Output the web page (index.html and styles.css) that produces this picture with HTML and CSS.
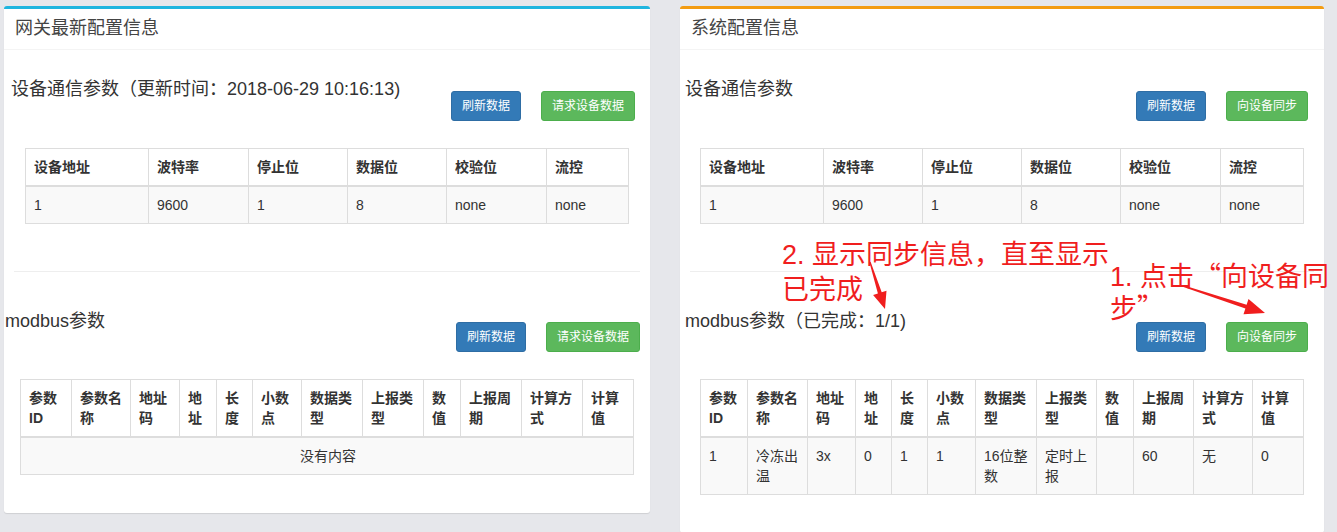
FILE: index.html
```html
<!DOCTYPE html>
<html lang="zh-CN">
<head>
<meta charset="utf-8">
<title>配置信息</title>
<link rel="stylesheet" href="styles.css">
</head>
<body>
<div class="page">
  <div class="box box-info box-left">
    <div class="box-header"><h3 class="box-title">网关最新配置信息</h3></div>
    <div class="box-body">
      <div class="sec sec-first pad-l1">
        <h4 class="sec-title">设备通信参数（更新时间：2018-06-29 10:16:13)</h4>
        <div class="btns"><span class="btn btn-blue">刷新数据</span><span class="btn btn-green">请求设备数据</span></div>
      </div>
      <table class="tbl tbl-comm">
        <colgroup><col class="c123"><col class="c100"><col class="c99"><col class="c99"><col class="c100"><col class="c82"></colgroup>
        <thead><tr><th>设备地址</th><th>波特率</th><th>停止位</th><th>数据位</th><th>校验位</th><th>流控</th></tr></thead>
        <tbody><tr><td>1</td><td>9600</td><td>1</td><td>8</td><td>none</td><td>none</td></tr></tbody>
      </table>
      <hr class="sep">
      <div class="sec sec-second pad-l2">
        <h4 class="sec-title">modbus参数</h4>
        <div class="btns"><span class="btn btn-blue">刷新数据</span><span class="btn btn-green">请求设备数据</span></div>
      </div>
      <table class="tbl tbl-mod-l">
        <colgroup><col class="c51"><col class="c59"><col class="c49"><col class="c37"><col class="c36"><col class="c49"><col class="c61"><col class="c61"><col class="c37"><col class="c61"><col class="c61"><col class="c51"></colgroup>
        <thead><tr><th>参数ID</th><th>参数名称</th><th>地址码</th><th>地址</th><th>长度</th><th>小数点</th><th>数据类型</th><th>上报类型</th><th>数值</th><th>上报周期</th><th>计算方式</th><th>计算值</th></tr></thead>
        <tbody><tr><td class="empty" colspan="12">没有内容</td></tr></tbody>
      </table>
    </div>
  </div>

  <div class="box box-warning box-right">
    <div class="box-header"><h3 class="box-title">系统配置信息</h3></div>
    <div class="box-body">
      <div class="sec sec-first pad-r">
        <h4 class="sec-title">设备通信参数</h4>
        <div class="btns"><span class="btn btn-blue">刷新数据</span><span class="btn btn-green">向设备同步</span></div>
      </div>
      <table class="tbl tbl-comm tbl-r">
        <colgroup><col class="c123"><col class="c99"><col class="c99"><col class="c99"><col class="c100"><col class="c83"></colgroup>
        <thead><tr><th>设备地址</th><th>波特率</th><th>停止位</th><th>数据位</th><th>校验位</th><th>流控</th></tr></thead>
        <tbody><tr><td>1</td><td>9600</td><td>1</td><td>8</td><td>none</td><td>none</td></tr></tbody>
      </table>
      <hr class="sep">
      <div class="sec sec-second pad-r">
        <h4 class="sec-title">modbus参数（已完成：1/1)</h4>
        <div class="btns"><span class="btn btn-blue">刷新数据</span><span class="btn btn-green">向设备同步</span></div>
      </div>
      <table class="tbl tbl-mod-r tbl-r">
        <colgroup><col class="c47"><col class="c60"><col class="c48"><col class="c36"><col class="c36"><col class="c48"><col class="c61"><col class="c60"><col class="c37"><col class="c60"><col class="c59"><col class="c51"></colgroup>
        <thead><tr><th>参数ID</th><th>参数名称</th><th>地址码</th><th>地址</th><th>长度</th><th>小数点</th><th>数据类型</th><th>上报类型</th><th>数值</th><th>上报周期</th><th>计算方式</th><th>计算值</th></tr></thead>
        <tbody><tr><td>1</td><td>冷冻出温</td><td>3x</td><td>0</td><td>1</td><td>1</td><td>16位整数</td><td>定时上报</td><td></td><td>60</td><td>无</td><td>0</td></tr></tbody>
      </table>
    </div>
  </div>
</div>

<div class="note note-2">2. 显示同步信息，直至显示<br>已完成</div>
<div class="note note-1">1. 点击<span class="q">“</span>向设备同<br>步<span class="q">”</span></div>

<svg class="arrows" width="1337" height="532" viewBox="0 0 1337 532" xmlns="http://www.w3.org/2000/svg">
  <polygon fill="#f01e1e" points="869.4,262.2 877.9,293.4 873.1,294.9 885,309 886.5,290.7 881.7,292.2 870.6,261.8"/>
  <polygon fill="#f01e1e" points="1183.3,285.2 1246.6,304.8 1248.5,299.1 1265,313 1243.5,314.3 1245.4,308.6 1182.7,286.8"/>
</svg>
</body>
</html>
```

FILE: styles.css
```css
* { box-sizing: border-box; }

html, body {
  margin: 0;
  padding: 0;
  background: #e6e7eb;
  font-family: "Liberation Sans", "Noto Sans CJK SC", sans-serif;
  font-size: 14px;
  color: #333;
  overflow: hidden;
}

.page {
  display: flex;
  align-items: flex-start;
  gap: 30px;
  padding: 6px 13px 0 4px;
}

.box {
  background: #fff;
  border-top: 3px solid #d2d6de;
  border-radius: 3px;
  box-shadow: 0 1px 1px rgba(0, 0, 0, 0.1);
}
.box-info { border-top-color: #1fb5df; }
.box-warning { border-top-color: #f39c12; }
.box-left { width: 646px; }
.box-right { width: 644px; }

.box-header {
  padding: 9px 10px 11px 11px;
  border-bottom: 1px solid #f4f4f4;
}
.box-title {
  margin: 0;
  font-size: 18px;
  line-height: 20px;
  font-weight: normal;
  color: #444;
}

.box-body {
  padding-bottom: 38px;
}

.sec {
  display: flex;
  align-items: flex-start;
}
.sec-first { margin-top: 29px; }
.sec-first .btns { margin-top: 12px; }
.sec-second { margin-top: 39px; }
.sec-second .btns { margin-top: 11px; }

.pad-l1 { padding: 0 15px 0 7px; }
.pad-l2 { padding: 0 10px 0 1px; }
.pad-r { padding: 0 16px 0 5px; }

.sec-title {
  margin: 0;
  font-size: 18px;
  line-height: 20px;
  font-weight: normal;
  color: #333;
}

.btns {
  margin-left: auto;
  display: flex;
  gap: 20px;
}
.btn {
  display: inline-block;
  padding: 5px 10px;
  font-size: 12px;
  line-height: 18px;
  border: 1px solid transparent;
  border-radius: 3px;
  color: #fff;
  white-space: nowrap;
}
.btn-blue { background: #337ab7; border-color: #2e6da4; }
.btn-green { background: #5cb85c; border-color: #4cae4c; }

.tbl {
  border-collapse: collapse;
  table-layout: fixed;
  margin-top: 27px;
  background: #fff;
}
.tbl-comm { width: 603px; margin-left: 21px; }
.tbl-mod-l { width: 613px; margin-left: 16px; }
.tbl-mod-r { width: 603px; }
.tbl-r { margin-left: 20px; }

.tbl th,
.tbl td {
  border: 1px solid #ddd;
  padding: 8px 6px 8px 8px;
  line-height: 20px;
  text-align: left;
  vertical-align: top;
}
.tbl th {
  font-weight: bold;
  vertical-align: bottom;
  border-bottom: 2px solid #ddd;
}
.tbl tbody tr { background: #f9f9f9; }
.tbl td.empty { text-align: center; }

.c123 { width: 123px; }
.c100 { width: 100px; }
.c99 { width: 99px; }
.c83 { width: 83px; }
.c82 { width: 82px; }
.c61 { width: 61px; }
.c60 { width: 60px; }
.c59 { width: 59px; }
.c51 { width: 51px; }
.c49 { width: 49px; }
.c48 { width: 48px; }
.c47 { width: 47px; }
.c37 { width: 37px; }
.c36 { width: 36px; }

.sep {
  margin: 47px 10px 0;
  border: 0;
  border-top: 1px solid #eee;
  height: 0;
}

.note {
  position: absolute;
  color: #f01e1e;
  font-family: "Liberation Sans", "Noto Sans CJK SC", sans-serif;
  font-size: 27px;
  white-space: nowrap;
}
.note .q { font-family: "Noto Sans CJK SC", sans-serif; }
.note-2 { left: 782px; top: 238px; line-height: 35px; }
.note-1 { left: 1110px; top: 260px; line-height: 29px; }

.arrows {
  position: absolute;
  left: 0;
  top: 0;
  pointer-events: none;
}
```
